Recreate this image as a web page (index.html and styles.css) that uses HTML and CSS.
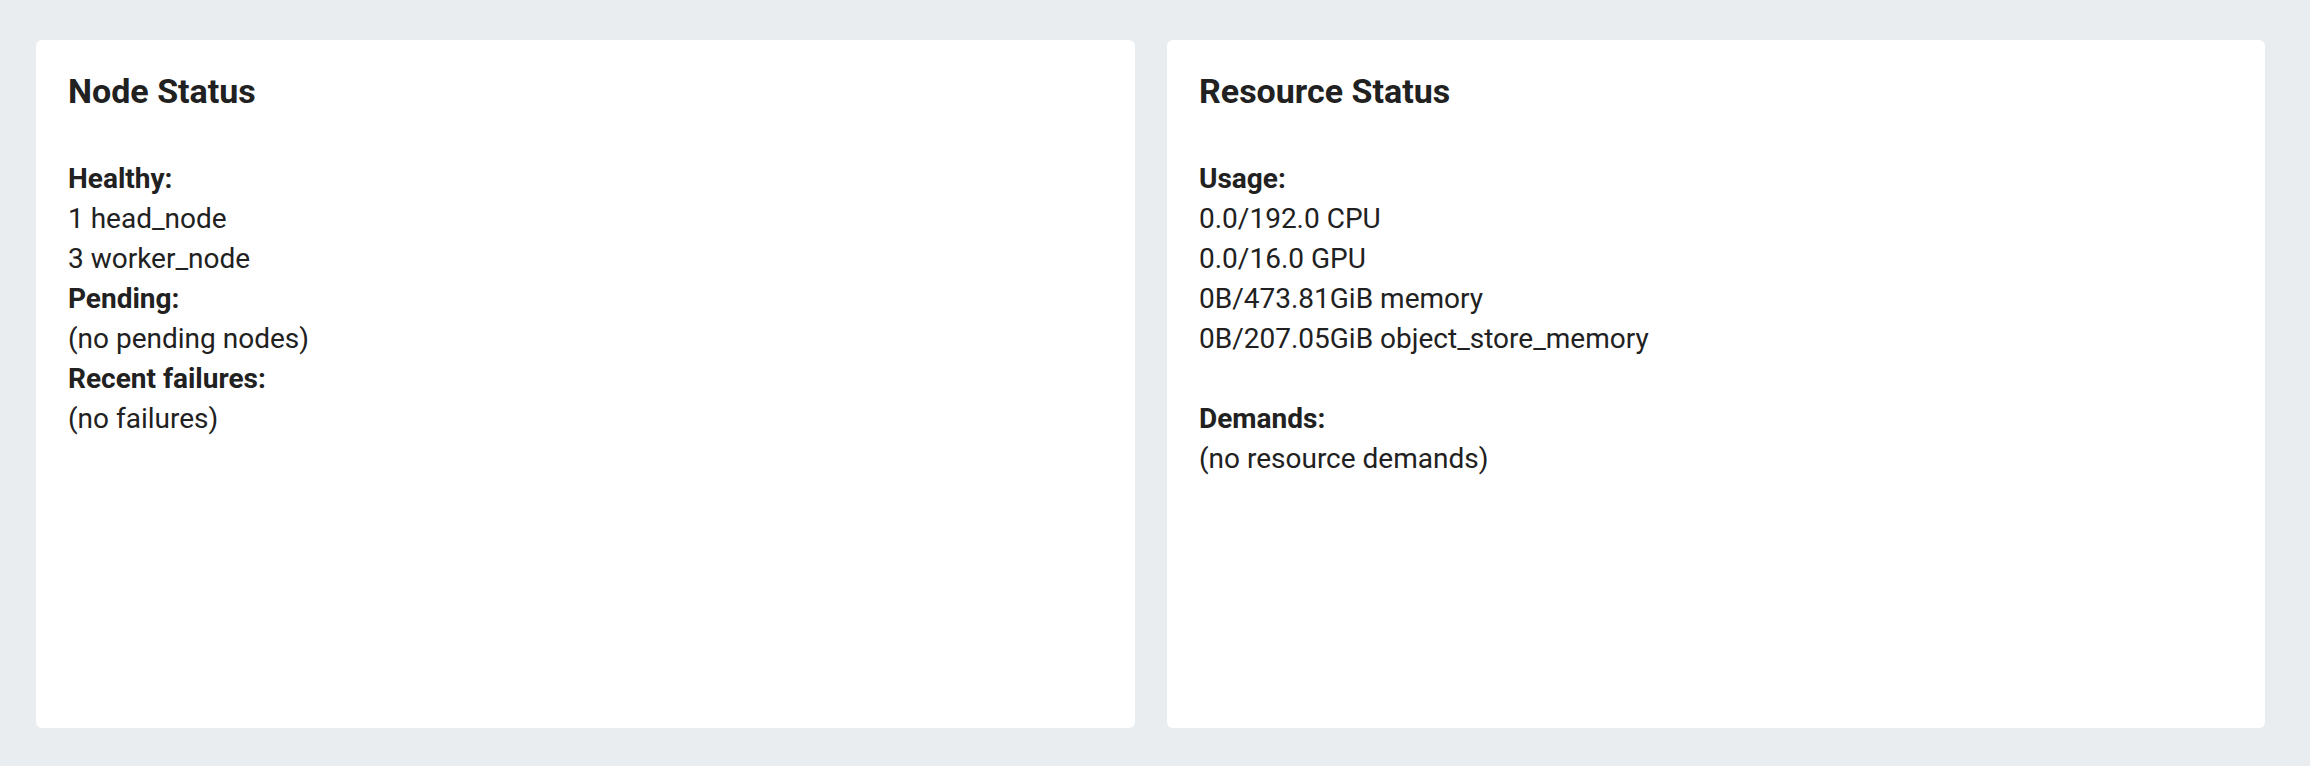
FILE: index.html
```html
<!DOCTYPE html>
<html>
<head>
<meta charset="utf-8">
<link rel="stylesheet" href="styles.css">
</head>
<body>
<div class="page">
  <section class="card">
    <h2 class="title">Node Status</h2>
    <div class="body">
      <div class="label">Healthy:</div>
      <div>1 head_node</div>
      <div>3 worker_node</div>
      <div class="label">Pending:</div>
      <div>(no pending nodes)</div>
      <div class="label">Recent failures:</div>
      <div>(no failures)</div>
    </div>
  </section>
  <section class="card">
    <h2 class="title">Resource Status</h2>
    <div class="body">
      <div class="label">Usage:</div>
      <div>0.0/192.0 CPU</div>
      <div>0.0/16.0 GPU</div>
      <div>0B/473.81GiB memory</div>
      <div>0B/207.05GiB object_store_memory</div>
      <div class="blank"></div>
      <div class="label">Demands:</div>
      <div>(no resource demands)</div>
    </div>
  </section>
</div>
</body>
</html>
```
FILE: styles.css
```css
html, body {
  margin: 0;
  padding: 0;
  background: #e9edf0;
}
body {
  font-family: Roboto, "Liberation Sans", sans-serif;
  color: #212121;
}
.page {
  display: grid;
  grid-template-columns: 1099px 1098px;
  gap: 32px;
  padding: 40px 45px 38px 36px;
  height: 766px;
  box-sizing: border-box;
}
.card {
  background: #ffffff;
  border-radius: 6px;
  padding: 31px 32px;
  box-sizing: border-box;
}
.title {
  margin: 0 0 48px 0;
  font-size: 34px;
  line-height: 40px;
  font-weight: 700;
}
.body {
  font-size: 28px;
  line-height: 40px;
}
.label {
  font-weight: 700;
}
.blank {
  height: 40px;
}
```
